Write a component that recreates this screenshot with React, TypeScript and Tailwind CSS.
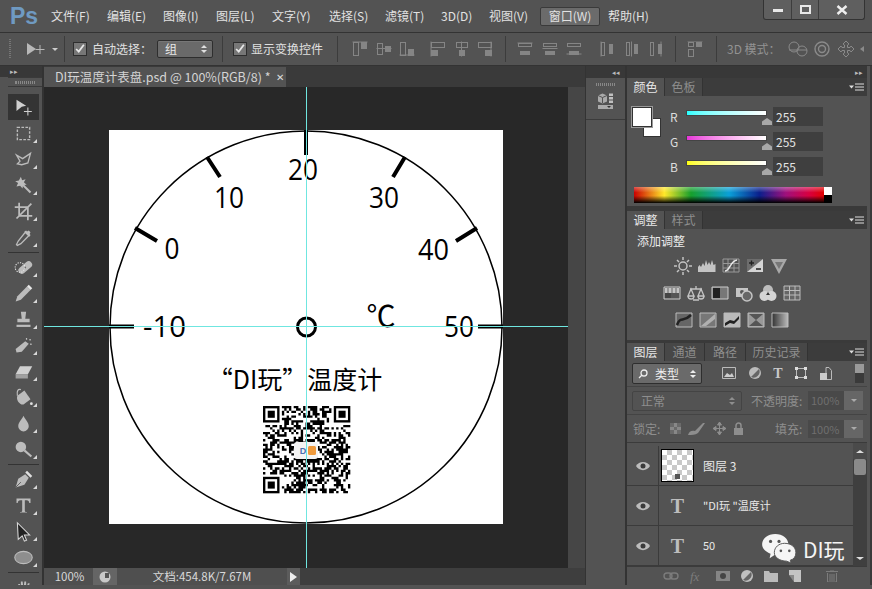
import React from 'react';

const CJK = "font-['Noto_Sans_CJK_SC','Noto_Sans',sans-serif]";

const menus = [
  ['文件(F)', 'w-[56px]'],
  ['编辑(E)', 'w-[56px]'],
  ['图像(I)', 'w-[53px]'],
  ['图层(L)', 'w-[56px]'],
  ['文字(Y)', 'w-[57px]'],
  ['选择(S)', 'w-[56px]'],
  ['滤镜(T)', 'w-[56px]'],
  ['3D(D)', 'w-[48px]'],
  ['视图(V)', 'w-[51px]'],
];

function Corner() {
  return <span className="absolute right-[2px] bottom-[3px] h-0 w-0 border-b-[4px] border-l-[4px] border-b-[#d8d8d8] border-l-transparent" />;
}

function Tool({ children, active, corner = true }: { children: React.ReactNode; active?: boolean; corner?: boolean }) {
  return (
    <div className={`relative flex h-[26px] w-[31px] shrink-0 items-center justify-center ${active ? 'bg-[#343434]' : ''}`}>
      <svg viewBox="0 0 24 24" className="h-[21px] w-[21px]" fill="#bcbcbc" stroke="none">{children}</svg>
      {corner && <Corner />}
    </div>
  );
}

function ToolSep() {
  return <div className="flex h-[4px] w-[31px] shrink-0 items-center"><div className="h-px w-full bg-[#333]" /></div>;
}

function Toolbox() {
  return (
    <div className="flex w-[44px] shrink-0 flex-col overflow-hidden border-r-2 border-[#333] pl-[8px]">
      <div className="-ml-[8px] flex h-[11px] shrink-0 items-center bg-[#383838] pl-[10px] text-[7px] leading-none text-[#bbb]">▸▸</div>
      <div className="flex h-[10px] w-[34px] shrink-0 items-center justify-center border-y border-[#3a3a3a]">
        <div className="h-[3px] w-[20px] border-x border-[#888] bg-[repeating-linear-gradient(90deg,#888_0_1px,transparent_1px_2px)]" />
      </div>
      <div className="flex flex-1 flex-col bg-[#535353] pt-[7px]">
        <Tool active corner={false}>
          <path d="M4 3l11 7-5 1 0 0-6 5z" fill="#d0d0d0" />
          <path d="M17 12v9M12.5 16.5h9" stroke="#d0d0d0" strokeWidth="1.2" fill="none" />
        </Tool>
        <Tool><rect x="5" y="5" width="14" height="14" fill="none" stroke="#bcbcbc" strokeWidth="1.6" strokeDasharray="3 1.6" /></Tool>
        <Tool><path d="M4 7l7 4 9-6-3 11-7 2-5-1 3-3z" fill="none" stroke="#bcbcbc" strokeWidth="1.5" /></Tool>
        <Tool>
          <path d="M9 2l1.4 4 4-1.2-2 3.6 3.2 2.6-4.1.4-.6 4.1-2.8-3.1L4 13l1.8-3.8L2.5 7l4.2-.8z" />
          <path d="M11 11l9 9" stroke="#bcbcbc" strokeWidth="2.4" />
        </Tool>
        <Tool><path d="M7 2v15h15M2 7h15v15M4 20L21 3" fill="none" stroke="#bcbcbc" strokeWidth="2" /></Tool>
        <Tool>
          <path d="M14 6l4 4-9 9-4 2-1-1 2-4z" fill="none" stroke="#bcbcbc" strokeWidth="1.5" />
          <path d="M13 5l6 6 1-2-1-1 1-2-2-2-2 1-1-1z" />
        </Tool>
        <ToolSep />
        <Tool>
          <g transform="rotate(-40 14 12)"><rect x="5" y="8" width="18" height="8" rx="4" /><circle cx="14" cy="12" r="1" fill="#535353" /></g>
          <circle cx="8" cy="12" r="5.5" fill="none" stroke="#e4e4e4" strokeWidth="1.2" strokeDasharray="1.4 1.4" />
        </Tool>
        <Tool>
          <path d="M3 21l2-6L16 4l4 4L9 19z" />
          <path d="M16 4l2-2 4 4-2 2z" fill="#e8e8e8" />
        </Tool>
        <Tool>
          <path d="M9 3h6l-1 8h5v4H5v-4h5z" />
          <rect x="4" y="18" width="16" height="2.5" />
        </Tool>
        <Tool>
          <path d="M3 16L14 7l4 3-8 9-6 1z" />
          <path d="M15 4l1 1M19 5l1 1M20 10l1 1" stroke="#e8e8e8" strokeWidth="1.4" />
        </Tool>
        <Tool>
          <path d="M3 15l5-9h14l-5 9z" fill="#d0d0d0" />
          <path d="M3 15h14v5H3z" fill="#a0a0a0" />
        </Tool>
        <Tool>
          <path d="M5 10l8-6 7 10-8 6c-4 1-9-5-7-10z" />
          <path d="M9 3c-3-1-5 1-4 7" stroke="#bcbcbc" strokeWidth="1.4" fill="none" />
          <circle cx="21" cy="19" r="1.6" fill="#e0e0e0" />
        </Tool>
        <Tool><path d="M12 3c2 5 6 7 6 12a6 6 0 0 1-12 0c0-5 4-7 6-12z" /></Tool>
        <Tool>
          <circle cx="9" cy="9" r="6" />
          <path d="M13 13l8 7" stroke="#bcbcbc" strokeWidth="2.4" />
        </Tool>
        <ToolSep />
        <Tool>
          <path d="M3 21l3-10 8-5 4 4-5 8z" />
          <path d="M14 4l2-2 6 6-2 2z" fill="#e0e0e0" />
          <path d="M3 21l6-6" stroke="#535353" strokeWidth="1" />
        </Tool>
        <Tool><path d="M4 4h16v5h-1.4c-.3-2-1-3-3-3H13.5v12c0 1 .5 1.4 2.5 1.4V20H8v-.6c2 0 2.500-.4 2.500-1.400V6H8.400c-2 0-2.700 1-3 3H4z" /></Tool>
        <Tool><path d="M5 2l14 14-6 0 2.500 6-2.500 1-2.500-6L6 21z" fill="#222" stroke="#d8d8d8" strokeWidth="1.2" /></Tool>
        <Tool><ellipse cx="12" cy="12" rx="10" ry="7" fill="#8e8e8e" stroke="#bdbdbd" strokeWidth="1.2" /></Tool>
        <ToolSep />
        <Tool corner={false}><path d="M3 14l3 2V8l2 0 1 5V5h2l1 8 1-8h2l0 8 2-6h2l-2 10 3-2 1 1-4 7H7z" /></Tool>
      </div>
    </div>
  );
}

function Align({ bars, line, horizontal }: { bars: number[][]; line: number; horizontal?: boolean }) {
  return (
    <svg viewBox="0 0 16 16" className="h-[16px] w-[16px] shrink-0" fill="none" stroke="#858585">
      {horizontal ? <path d={`M${line} .5V15.500`} /> : <path d={`M.5 ${line}H15.500`} />}
      {bars.map(([a, b, c, d], i) => (
        <rect key={i} x={a + 0.5} y={b + 0.5} width={c} height={d} fill={i === 1 ? '#858585' : 'none'} />
      ))}
    </svg>
  );
}

function Check() {
  return (
    <div className="flex h-[14px] w-[14px] shrink-0 items-center justify-center border border-[#2e2e2e] bg-[#777]">
      <svg viewBox="0 0 14 14" className="h-[14px] w-[14px]"><path d="M2.500 7l3 3 6-8" fill="none" stroke="#e8e8e8" strokeWidth="2" /></svg>
    </div>
  );
}

function Sep({ className }: { className: string }) {
  return <div className={`h-[26px] w-px shrink-0 bg-[#3c3c3c] ${className}`} />;
}

function OptionsBar() {
  return (
    <div className="flex h-[34px] shrink-0 items-center border-y border-[#333] bg-[#535353] text-[12px] whitespace-nowrap text-[#e0e0e0]">
      <div className="ml-[9px] h-[20px] w-[3px] bg-[repeating-linear-gradient(180deg,#777_0_1px,transparent_1px_2px)]" />
      <svg viewBox="0 0 20 14" className="ml-[15px] h-[14px] w-[20px] shrink-0">
        <path d="M1 1l9 6-9 6z" fill="#b8b8b8" />
        <path d="M14 3v9M9.500 7.500h9" stroke="#b8b8b8" fill="none" />
      </svg>
      <span className="ml-[6px] h-0 w-0 border-x-[3px] border-t-[3px] border-x-transparent border-t-[#ccc]" />
      <Sep className="ml-[6px]" />
      <div className="ml-[8px]"><Check /></div>
      <span className="ml-[5px] w-[60px] shrink-0">自动选择：</span>
      <div className="ml-[5px] flex h-[18px] w-[56px] shrink-0 items-center justify-between rounded-[2px] border border-[#2e2e2e] bg-[#6a6a6a] pr-[5px] pl-[7px] text-[#e8e8e8] shadow-[inset_0_1px_0_#777]">
        <span>组</span>
        <span className="flex flex-col gap-[2px]">
          <span className="block h-0 w-0 border-x-[3px] border-b-[3px] border-x-transparent border-b-[#e0e0e0]" />
          <span className="block h-0 w-0 border-x-[3px] border-t-[3px] border-x-transparent border-t-[#e0e0e0]" />
        </span>
      </div>
      <Sep className="ml-[9px]" />
      <div className="ml-[10px]"><Check /></div>
      <span className="ml-[4px] w-[72px] shrink-0">显示变换控件</span>
      <Sep className="ml-[14px]" />
      <div className="ml-[14px] flex w-[63px] shrink-0 justify-between">
        <Align line={1} bars={[[1, 1, 5, 13], [9, 1, 5, 6]]} />
        <Align line={7.5} bars={[[1, 2, 5, 11], [9, 5, 5, 5]]} />
        <Align line={14} bars={[[1, 1, 5, 13], [9, 8, 5, 6]]} />
      </div>
      <div className="ml-[15px] flex w-[63px] shrink-0 justify-between">
        <Align line={1} horizontal bars={[[1, 1, 13, 5], [1, 9, 6, 5]]} />
        <Align line={7.5} horizontal bars={[[2, 1, 11, 5], [5, 9, 5, 5]]} />
        <Align line={14} horizontal bars={[[1, 1, 13, 5], [8, 9, 6, 5]]} />
      </div>
      <Sep className="ml-[12px] mr-[11px]" />
      <div className="flex w-[65px] shrink-0 justify-between">
        <Align line={2} bars={[[1, 2, 13, 3], [3, 10, 9, 3]]} />
        <Align line={7.5} bars={[[1, 2, 13, 3], [3, 10, 9, 3]]} />
        <Align line={13} bars={[[1, 2, 13, 3], [3, 10, 9, 3]]} />
      </div>
      <div className="ml-[17px] flex w-[65px] shrink-0 justify-between">
        <Align line={2} horizontal bars={[[2, 1, 3, 13], [10, 3, 3, 9]]} />
        <Align line={7.5} horizontal bars={[[2, 1, 3, 13], [10, 3, 3, 9]]} />
        <Align line={13} horizontal bars={[[2, 1, 3, 13], [10, 3, 3, 9]]} />
      </div>
      <Sep className="ml-[11px]" />
      <div className="ml-[11px]"><Align line={0} bars={[[1, 1, 5, 4], [9, 1, 5, 4], [1, 8, 5, 7]]} /></div>
      <Sep className="ml-[13px]" />
      <span className="ml-[10px] w-[50px] shrink-0 text-[#929292]">3D 模式：</span>
      <svg viewBox="0 0 22 16" className="ml-[10px] h-[16px] w-[22px] shrink-0" fill="none" stroke="#8a8a8a"><circle cx="7" cy="6" r="5" /><circle cx="15" cy="10" r="5" /><path d="M2 9h18" /></svg>
      <svg viewBox="0 0 16 16" className="ml-[5px] h-[16px] w-[16px] shrink-0" fill="none" stroke="#8a8a8a" strokeWidth="1.4"><circle cx="8" cy="8" r="7" /><circle cx="8" cy="8" r="3.500" /></svg>
      <svg viewBox="0 0 18 18" className="ml-[7px] h-[18px] w-[18px] shrink-0" fill="none" stroke="#8a8a8a"><path d="M9 1l3 3-1.500 1V7.500H13L14 6l3 3-3 3-1-1.500H10.500V13l1.500 1-3 3-3-3 1.500-1V10.500H5L4 12 1 9l3-3 1 1.500h2.500V5L6 4z" /></svg>
      <svg viewBox="0 0 12 16" className="ml-[5px] h-[16px] w-[12px] shrink-0" fill="#8a8a8a"><path d="M0 8l4-3v6z" /></svg>
    </div>
  );
}

function TopBar() {
  return (
    <div className="relative flex h-[32px] shrink-0 items-center bg-[#535353] pl-[10px] text-[12px] text-[#e2e2e2]">
      <span className="w-[41px] shrink-0 font-['Liberation_Sans',sans-serif] text-[23px] leading-none font-bold text-[#6f9ac2]">Ps</span>
      {menus.map(([m, w]) => (
        <span key={m} className={`${w} shrink-0`}>{m}</span>
      ))}
      <span className="flex h-[19px] w-[60px] shrink-0 items-center justify-center rounded-[2px] border border-[#3a3a3a] bg-[#6b6b6b]">窗口(W)</span>
      <span className="ml-[8px] shrink-0">帮助(H)</span>
      <div className="absolute top-0 right-[7px] flex h-[20px] w-[102px] rounded-b-[3px] border border-t-0 border-[#333] bg-[#5f5f5f]">
        <div className="flex w-[28px] items-center justify-center border-r border-[#3d3d3d]"><div className="mt-[2px] h-[3px] w-[10px] bg-[#e8e8e8]" /></div>
        <div className="flex w-[27px] items-center justify-center border-r border-[#3d3d3d]"><div className="h-[9px] w-[11px] border-2 border-[#e8e8e8]" /></div>
        <div className="flex flex-1 items-center justify-center">
          <svg viewBox="0 0 12 10" className="h-[10px] w-[12px]"><path d="M1.500 1l9 8M10.500 1l-9 8" stroke="#eee" strokeWidth="2.400" /></svg>
        </div>
      </div>
    </div>
  );
}

// fake QR pattern, same every run
function qrPath() {
  const n = 37;
  let seed = 90121;
  let d = '';
  const finder = (x: number, y: number) => x < 8 && y < 8;
  for (let y = 0; y < n; y++) {
    for (let x = 0; x < n; x++) {
      seed = (seed * 1103515245 + 12345) & 0x7fffffff;
      const on = ((seed >> 16) & 7) < 4;
      if (finder(x, y) || finder(n - 1 - x, y) || finder(x, n - 1 - y)) continue;
      if (on) d += `M${x} ${y}h1v1h-1z`;
    }
  }
  return d;
}

function Finder({ x, y }: { x: number; y: number }) {
  return (
    <g>
      <rect x={x + 0.5} y={y + 0.5} width="6" height="6" fill="none" stroke="#000" />
      <rect x={x + 2} y={y + 2} width="3" height="3" fill="#000" />
    </g>
  );
}

function Dial() {
  const font = "'Open Sans','Noto Sans CJK SC',sans-serif";
  const labels: [string, number, number, number][] = [
    ['20', 194, 50, 30],
    ['10', 120, 78, 30],
    ['30', 275, 78, 30],
    ['0', 63, 129, 15],
    ['40', 324.500, 130, 31],
    ['-10', 55.500, 207, 43],
    ['50', 350, 207, 30],
  ];
  return (
    <svg viewBox="0 0 394 394" className="h-full w-full">
      <circle cx="197" cy="197" r="196" fill="none" stroke="#000" strokeWidth="1.500" />
      <path
        d="M197 0V25M98 27L111 47M296 27L284 47M26 98L48 111M368 98L347 111M0 196.500H25M369 196.500H394"
        stroke="#000"
        strokeWidth="4"
        fill="none"
      />
      <circle cx="197.500" cy="197" r="9" fill="none" stroke="#000" strokeWidth="3" />
      {labels.map(([t, x, y, w]) => (
        <text key={t} x={x} y={y} textAnchor="middle" fontFamily={font} fontSize="29" textLength={w} lengthAdjust="spacingAndGlyphs" fill="#000">{t}</text>
      ))}
      <text x="272" y="197" textAnchor="middle" fontFamily="'Noto Sans CJK SC',sans-serif" fontSize="29" fill="#000">℃</text>
      <text x="186" y="259" textAnchor="middle" fontFamily="'Noto Sans CJK SC',sans-serif" fontSize="25" fill="#000">“DI玩”温度计</text>
      <g transform="translate(154 276) scale(2.36)">
        <path d={qrPath()} fill="#000" />
        <Finder x={0} y={0} />
        <Finder x={30} y={0} />
        <Finder x={0} y={30} />
      </g>
      <rect x="185" y="312" width="24" height="17" rx="3" fill="#f4f4f4" />
      <text x="194" y="324" textAnchor="middle" fontFamily="'Liberation Sans',sans-serif" fontSize="9" fontWeight="700" fill="#4a6fb0">D</text>
      <rect x="199" y="316" width="8" height="9" rx="1.500" fill="#ef9a3c" />
    </svg>
  );
}

function DocArea() {
  return (
    <div className="flex min-w-0 flex-1 flex-col">
      <div className="flex h-[21px] shrink-0 items-end bg-[#3a3a3a]">
        <div className="flex h-[20px] w-[242px] items-center bg-[#535353] pl-[11px] text-[12.500px] text-[#d4d4d4]">
          <span className="w-[221px] shrink-0 whitespace-nowrap">DI玩温度计表盘.psd @ 100%(RGB/8) *</span>
          <span className="text-[10px] leading-none text-[#ddd]">✕</span>
        </div>
      </div>
      <div className="flex min-h-0 flex-1">
        <div className="relative flex flex-1 items-center justify-center bg-[#282828] pb-px">
          <div className="h-[394px] w-[394px] shrink-0 bg-white"><Dial /></div>
          <div className="absolute top-0 bottom-0 left-[262px] w-px bg-[#6fe6e0]" />
          <div className="absolute top-[239px] right-0 left-0 h-px bg-[#6fe6e0]" />
        </div>
        <div className="w-[17px] shrink-0 bg-[#464646]" />
      </div>
      <div className="flex h-[17px] shrink-0 items-center bg-[#3e3e3e] text-[11.500px] text-[#d8d8d8]">
        <div className="flex h-full w-[49px] items-center justify-center bg-[#4f4f4f] pl-[2px]">100%</div>
        <div className="flex h-full w-[24px] items-center justify-center bg-[#656565]">
          <svg viewBox="0 0 12 12" className="h-[12px] w-[12px]"><circle cx="6" cy="6" r="5.500" fill="#c8c8c8" /><path d="M6 2h4v5H6z" fill="#555" /></svg>
        </div>
        <div className="flex h-full w-[170px] items-center justify-center bg-[#4f4f4f]">文档:454.8K/7.67M</div>
        <div className="flex h-full w-[13px] items-center justify-center bg-[#5c5c5c]">
          <span className="h-0 w-0 border-y-[5px] border-l-[7px] border-y-transparent border-l-[#eee]" />
        </div>
      </div>
    </div>
  );
}

function MenuIcon() {
  return (
    <svg viewBox="0 0 16 9" className="h-[9px] w-[16px] shrink-0">
      <path d="M0 2.500h5L2.500 5.500z" fill="#ddd" />
      <path d="M6 1h9M6 4h9M6 7h9" stroke="#ddd" />
    </svg>
  );
}

function Tabs({ tabs, first = 'w-[38px]' }: { tabs: [string, string][]; first?: string }) {
  return (
    <div className="flex h-[18px] shrink-0 items-stretch bg-[#3c3c3c] text-[12px] leading-[18px]">
      {tabs.map(([t, w], i) => (
        <div key={t} className={`${i === 0 ? `${first} bg-[#535353] text-[#e8e8e8]` : `${w} bg-[#474747] text-[#8e8e8e]`} shrink-0 border-r border-[#333] text-center`}>{t}</div>
      ))}
      <div className="ml-auto flex items-center pr-[2px]"><MenuIcon /></div>
    </div>
  );
}

function ColorRow({ label, grad }: { label: string; grad: string }) {
  return (
    <div className="flex h-[19px] items-center">
      <span className="w-[16px] text-[12px] text-[#ddd]">{label}</span>
      <div className="relative mb-[7px] h-[6px] w-[81px] border border-[#444]">
        <div className={`h-full w-full ${grad}`} />
        <span className="absolute top-[7px] -right-[6px] h-[7px] w-[10px] bg-[#a8a8a8] [clip-path:polygon(50%_0,100%_50%,100%_100%,0_100%,0_50%)]" />
      </div>
      <div className="ml-[6px] flex h-[19px] w-[50px] items-center bg-[#3f3f3f] pl-[3px] text-[12px] text-[#e4e4e4]">255</div>
    </div>
  );
}

function ColorPanel() {
  return (
    <div className="flex h-[110px] shrink-0 flex-col bg-[#535353] pl-[5px]">
      <div className="flex pt-[11px]">
        <div className="relative h-[30px] w-[29px] shrink-0">
          <div className="absolute top-[11px] left-[11px] h-[19px] w-[18px] border border-[#333] bg-white" />
          <div className="absolute top-0 left-0 h-[20px] w-[20px] border border-[#333] bg-white outline outline-[#999]" />
        </div>
        <div className="ml-[9px] flex flex-col gap-[6px]">
          <ColorRow label="R" grad="bg-linear-to-r from-[#2ff] to-white" />
          <ColorRow label="G" grad="bg-linear-to-r from-[#e633d8] to-white" />
          <ColorRow label="B" grad="bg-linear-to-r from-[#ff0] to-white" />
        </div>
      </div>
      <div className="mt-[11px] ml-[2px] flex h-[16px] w-[198px]">
        <div className="flex-1 bg-[linear-gradient(180deg,#ffffff55_0,#ffffff00_35%,#00000000_55%,#000_100%),linear-gradient(90deg,#c00_0,#ffe82a_16%,#17a02c_30%,#0aa0d8_50%,#0b1f8c_66%,#a0107c_80%,#d80040_92%,#e00000_100%)]" />
        <div className="flex w-[8px] flex-col"><div className="flex-1 bg-white" /><div className="flex-1 bg-black" /></div>
      </div>
    </div>
  );
}

function Adj({ children }: { children: React.ReactNode }) {
  return <svg viewBox="0 0 18 18" className="h-[18px] w-[18px] shrink-0">{children}</svg>;
}

const gradA = '#c4c4c4';

function AdjustPanel() {
  return (
    <div className="flex h-[111px] shrink-0 flex-col bg-[#535353]">
      <div className="pt-[3px] pl-[10px] text-[12px] leading-[17px] text-[#ececec]">添加调整</div>
      <div className="mt-[8px] flex gap-[6px] pl-[47px]">
        <Adj>
          <circle cx="9" cy="9" r="4" fill="none" stroke={gradA} strokeWidth="1.500" />
          <path d="M9 0v3M9 15v3M0 9h3M15 9h3M3 3l2 2M15 3l-2 2M3 15l2-2M15 15l-2-2" stroke={gradA} strokeWidth="1.500" />
        </Adj>
        <Adj><path d="M0 15V10l1.500-2 1.500 2 2-4 1.500 3 1.500-6 1.500 5 1.500-3 1.500 3 1.500-5 1.500 5 2-1V15z" fill={gradA} /></Adj>
        <Adj>
          <path d="M1 2h16v13H1zM1 6.500h16M1 11h16M6 2v13M12 2v13" fill="none" stroke="#999" />
          <path d="M3 14c5 0 5-10 12-11" fill="none" stroke="#e8e8e8" strokeWidth="1.500" />
        </Adj>
        <Adj>
          <path d="M1 2h16v13H1z" fill="#6d6d6d" />
          <path d="M1 15L17 2v13z" fill="#d4d4d4" />
          <path d="M3 6h5M5.500 3.500v5M10 12h5" stroke="#222" strokeWidth="1.400" />
        </Adj>
        <Adj><path d="M1 2h16l-8 15z" fill="#a8a8a8" /><path d="M5 5h8l-4 7z" fill="#777" /></Adj>
      </div>
      <div className="mt-[9px] flex gap-[6px] pl-[36px]">
        <Adj><path d="M1 3h16v12H1z" fill="#555" stroke="#ccc" /><path d="M2 4h14v5H2z" fill="#c4c4c4" /><path d="M2 9h6v5H2z" fill="#444" /><path d="M5 4v5M9 4v5M13 4v5" stroke="#666" /></Adj>
        <Adj><path d="M9 2v3M3 5h12M1 12l3-7 3 7zM11 12l3-7 3 7zM1 12c0 4 6 4 6 0zM11 12c0 4 6 4 6 0zM6 16h6" fill="none" stroke={gradA} strokeWidth="1.300" /></Adj>
        <Adj><path d="M1 3h16v12H1z" fill="#777" stroke="#ccc" /><path d="M2 4h7v10H2z" fill="#222" /></Adj>
        <Adj>
          <path d="M1 4h12v9H1z" fill={gradA} />
          <circle cx="7" cy="8" r="2" fill="#555" />
          <circle cx="12" cy="12" r="5" fill="#666" stroke={gradA} strokeWidth="1.500" />
        </Adj>
        <Adj><circle cx="9" cy="6" r="5" fill="#bdbdbd" /><circle cx="5.500" cy="12" r="5" fill="#d4d4d4" /><circle cx="12.500" cy="12" r="5" fill="#d4d4d4" /><path d="M9 8l-2 3h4z" fill="#333" /></Adj>
        <Adj><path d="M1 2h16v14H1zM1 6.500h16M1 11h16M6.500 2v14M12 2v14" fill="#666" stroke="#bbb" /></Adj>
      </div>
      <div className="mt-[9px] flex gap-[6px] pl-[48px]">
        <Adj><path d="M1 2h16v14H1z" fill="#666" stroke="#bbb" /><path d="M2 14C5 5 8 12 16 4" fill="none" stroke="#222" strokeWidth="2.500" /></Adj>
        <Adj><path d="M1 2h16v14H1z" fill="#777" stroke="#bbb" /><path d="M2 15L16 3v5L7 15z" fill="#b0b0b0" /></Adj>
        <Adj><path d="M1 2h16v14H1z" fill="#bbb" stroke="#bbb" /><path d="M2 12l5-3 4 1 5-5v3l-5 5-4-1-5 3z" fill="#222" /></Adj>
        <Adj><path d="M1 2h16v14H1z" fill="#999" stroke="#bbb" /><path d="M2 3h14L9 9zM2 15h14L9 9z" fill="#555" /></Adj>
        <Adj><defs><linearGradient id="gm"><stop offset="0" stopColor="#333" /><stop offset="1" stopColor="#bbb" /></linearGradient></defs><path d="M1 2h16v14H1z" fill="url(#gm)" stroke="#bbb" /></Adj>
      </div>
    </div>
  );
}

function Eye() {
  return (
    <div className="flex w-[31px] shrink-0 items-center justify-center">
      <svg viewBox="0 0 14 10" className="h-[10px] w-[14px]"><path d="M0 5c3-5.500 11-5.500 14 0-3 5.500-11 5.500-14 0z" fill="#bcbcbc" /><circle cx="7" cy="5" r="2.500" fill="#3b3b3b" /></svg>
    </div>
  );
}

function LayerRow({ name, thumb, textCls }: { name: string; thumb: React.ReactNode; textCls: string }) {
  return (
    <div className="flex h-[40px] shrink-0 border-b border-[#3b3b3b]">
      <Eye />
      <div className="flex w-[45px] shrink-0 items-center border-l border-[#3b3b3b] pl-[2px]">{thumb}</div>
      <span className={`self-center whitespace-nowrap ${textCls} text-[#e8e8e8]`}>{name}</span>
    </div>
  );
}

function TIcon() {
  return <span className="w-[33px] text-center font-['Liberation_Serif',serif] text-[20px] leading-none font-bold text-[#bdbdbd]">T</span>;
}

function Caret() {
  return (
    <span className="flex flex-col gap-[2px]">
      <span className="block h-0 w-0 border-x-[3px] border-b-[3px] border-x-transparent border-b-current" />
      <span className="block h-0 w-0 border-x-[3px] border-t-[3px] border-x-transparent border-t-current" />
    </span>
  );
}

function LayersPanel() {
  return (
    <div className="flex min-h-0 flex-1 flex-col bg-[#535353] text-[12px]">
      <div className="flex h-[26px] shrink-0 items-center border-b border-[#444] pl-[5px]">
        <div className="flex h-[21px] w-[70px] shrink-0 items-center rounded-[2px] border border-[#2e2e2e] bg-[#6a6a6a] px-[5px] text-[#eee]">
          <svg viewBox="0 0 10 10" className="h-[10px] w-[10px] shrink-0"><circle cx="6" cy="4" r="3" fill="none" stroke="#eee" strokeWidth="1.300" /><path d="M4 6L1 9" stroke="#eee" strokeWidth="1.300" /></svg>
          <span className="ml-[7px]">类型</span>
          <span className="ml-auto"><Caret /></span>
        </div>
        <div className="ml-[20px] flex w-[110px] shrink-0 justify-between text-[#c8c8c8]">
          <svg viewBox="0 0 14 12" className="h-[12px] w-[14px]"><path d="M.5.5h13v11H.5z" fill="#555" stroke="#bbb" /><path d="M2 10l3-4 3 2 2-2 2 4z" fill="#ccc" /></svg>
          <svg viewBox="0 0 12 12" className="h-[12px] w-[12px]"><circle cx="6" cy="6" r="6" fill="#bbb" /><path d="M10 2a6 6 0 0 1-8 8z" fill="#666" /></svg>
          <span className="font-['Liberation_Serif',serif] text-[14px] leading-none font-bold">T</span>
          <svg viewBox="0 0 12 12" className="h-[12px] w-[12px]"><path d="M1.500 1.500h9v9h-9z" fill="none" stroke="#bbb" /><path d="M0 0h3v3H0zM9 0h3v3H9zM0 9h3v3H0zM9 9h3v3H9z" fill="#ddd" /></svg>
          <svg viewBox="0 0 12 14" className="h-[14px] w-[12px]"><path d="M6 .5h3l2.500 3v9H6z" fill="none" stroke="#bbb" /><path d="M0 6h7v7H0z" fill="#ccc" /></svg>
        </div>
        <div className="ml-[23px] flex h-[19px] w-[9px] shrink-0 flex-col bg-[#3a3a3a]"><div className="h-[9px] bg-[#999]" /></div>
      </div>
      <div className="flex h-[28px] shrink-0 items-center border-b border-[#444] pl-[5px] text-[#8e8e8e]">
        <div className="flex h-[20px] w-[110px] shrink-0 items-center justify-between rounded-[2px] border border-[#444] pr-[6px] pl-[8px]">
          <span>正常</span>
          <Caret />
        </div>
        <span className="ml-[9px] w-[57px] shrink-0">不透明度:</span>
        <div className="flex h-[19px] w-[55px] shrink-0 text-[11px]">
          <div className="flex-1 bg-[#494949] pl-[3px] leading-[19px] text-[#6f6f6f]">100%</div>
          <div className="flex w-[19px] items-center justify-center bg-[#666]"><span className="h-0 w-0 border-x-[3px] border-t-[3px] border-x-transparent border-t-[#aaa]" /></div>
        </div>
      </div>
      <div className="flex h-[28px] shrink-0 items-center border-b border-[#3b3b3b] pl-[6px] text-[#8e8e8e]">
        <span className="w-[37px] shrink-0">锁定:</span>
        <div className="flex w-[74px] shrink-0 items-center justify-between">
          <svg viewBox="0 0 11 11" className="h-[11px] w-[11px]"><path d="M0 0h11v11H0z" fill="#888" /><path d="M0 0h4v4H0zM7 0h4v4H7zM4 4h3v3H4zM0 7h4v4H0zM7 7h4v4H7z" fill="#6a6a6a" /></svg>
          <svg viewBox="0 0 18 12" className="h-[12px] w-[18px]"><path d="M0 12c1-4 4-5 7-4L15 0h2L10 10c-3 2-6 2-10 2z" fill="#8e8e8e" /></svg>
          <svg viewBox="0 0 13 13" className="h-[13px] w-[13px]"><path d="M6.500 0v13M0 6.500h13M6.500 0L4.500 3h4zM6.500 13l-2-3h4zM0 6.500l3-2v4zM13 6.500l-3-2v4z" stroke="#8e8e8e" fill="#8e8e8e" /></svg>
          <svg viewBox="0 0 11 13" className="h-[13px] w-[11px]"><path d="M3 6V3.500a2.500 2.500 0 0 1 5 0V6" fill="none" stroke="#8e8e8e" strokeWidth="1.500" /><path d="M1 6h9v7H1z" fill="#8e8e8e" /></svg>
        </div>
        <span className="ml-[31px] w-[33px] shrink-0">填充:</span>
        <div className="flex h-[18px] w-[55px] shrink-0 text-[11px]">
          <div className="flex-1 bg-[#494949] pl-[3px] leading-[18px] text-[#6f6f6f]">100%</div>
          <div className="flex w-[19px] items-center justify-center bg-[#666]"><span className="h-0 w-0 border-x-[3px] border-t-[3px] border-x-transparent border-t-[#aaa]" /></div>
        </div>
      </div>
      <div className="flex min-h-0 flex-1">
        <div className="flex min-w-0 flex-1 flex-col pt-[3px]">
          <LayerRow
            name="图层 3"
            textCls="text-[12px]"
            thumb={<div className="flex h-[33px] w-[33px] items-end justify-center border border-black bg-[repeating-conic-gradient(#c9c9c9_0_25%,#fff_0_50%)] bg-[length:10px_10px] pb-[2px]"><div className="h-[5px] w-[5px] bg-[#555]" /></div>}
          />
          <LayerRow name={'"DI玩 "温度计'} textCls="text-[11px]" thumb={<TIcon />} />
          <LayerRow name="50" textCls="text-[11px]" thumb={<TIcon />} />
        </div>
        <div className="flex w-[14px] shrink-0 flex-col items-center bg-[#3f3f3f]">
          <div className="flex h-[16px] w-full items-center justify-center bg-[#4a4a4a]"><span className="h-0 w-0 border-x-[4px] border-b-[3px] border-x-transparent border-b-[#ddd]" /></div>
          <div className="h-[16px] w-[12px] rounded-[2px] bg-[#8a8a8a]" />
          <div className="mt-auto flex h-[16px] items-center"><span className="h-0 w-0 border-x-[4px] border-t-[3px] border-x-transparent border-t-[#ddd]" /></div>
        </div>
      </div>
      <div className="flex h-[19px] shrink-0 items-center gap-[11px] border-t border-[#3b3b3b] pl-[36px]">
        <svg viewBox="0 0 16 8" className="h-[8px] w-[16px]"><rect x="1" y="1" width="8" height="6" rx="3" fill="none" stroke="#7c7c7c" strokeWidth="1.400" /><rect x="7" y="1" width="8" height="6" rx="3" fill="none" stroke="#7c7c7c" strokeWidth="1.400" /></svg>
        <span className="w-[15px] font-['Liberation_Serif',serif] text-[13px] leading-none text-[#7c7c7c] italic">fx</span>
        <svg viewBox="0 0 14 10" className="h-[10px] w-[14px]"><path d="M0 0h14v10H0z" fill="#858585" /><circle cx="7" cy="5" r="3" fill="#444" /></svg>
        <svg viewBox="0 0 12 12" className="h-[12px] w-[12px]"><circle cx="6" cy="6" r="6" fill="#c0c0c0" /><path d="M10 2a6 6 0 0 1-8 8z" fill="#666" /></svg>
        <svg viewBox="0 0 14 11" className="h-[11px] w-[14px]"><path d="M0 0h5l1 2h8v9H0z" fill="#bbb" /></svg>
        <svg viewBox="0 0 12 12" className="h-[12px] w-[12px]"><path d="M0 0h12v12H5V5H0z" fill="#c4c4c4" /><path d="M0 5h5v7z" fill="#888" /></svg>
        <svg viewBox="0 0 12 12" className="ml-[14px] h-[12px] w-[12px]"><path d="M0 1.500h12M4 0h4M1.500 3v9h9V3M4 4v7M6 4v7M8 4v7" stroke="#7c7c7c" fill="none" /></svg>
      </div>
    </div>
  );
}

function Panels() {
  return (
    <div className="relative flex w-[245px] shrink-0 flex-col border-r-2 border-[#3a3a3a] pr-[3px]">
      <div className="flex h-[12px] shrink-0 items-center justify-end bg-[#383838] pr-[4px] text-[7px] leading-none text-[#bbb]">▸▸</div>
      <Tabs tabs={[['颜色', ''], ['色板', 'w-[38px]']]} />
      <ColorPanel />
      <div className="h-[5px] shrink-0 bg-[#3a3a3a]" />
      <Tabs tabs={[['调整', ''], ['样式', 'w-[38px]']]} />
      <AdjustPanel />
      <div className="h-[3px] shrink-0 bg-[#3a3a3a]" />
      <Tabs tabs={[['图层', ''], ['通道', 'w-[40px]'], ['路径', 'w-[41px]'], ['历史记录', 'w-[62px]']]} />
      <LayersPanel />
      {/* watermark on top of the screenshot */}
      <div className="absolute top-[467px] left-[135px] flex items-start">
        <svg viewBox="0 0 36 32" className="h-[30px] w-[34px]">
          <path d="M14 1c8 0 14 5 14 11S22 23 14 23l-6 4 1-5C4 20 0 17 0 12 0 6 6 1 14 1z" fill="#f5f5f5" />
          <path d="M24 11c7 0 12 4 12 10 0 4-2 7-6 8l1 3-5-2c-7 0-13-4-13-9 0-6 5-10 11-10z" fill="#f5f5f5" stroke="#535353" />
          <circle cx="9" cy="9" r="1.700" fill="#535353" /><circle cx="18" cy="9" r="1.700" fill="#535353" />
          <circle cx="20" cy="19" r="1.400" fill="#535353" /><circle cx="29" cy="19" r="1.400" fill="#535353" />
        </svg>
        <span className="mt-[2px] ml-[7px] text-[21px] leading-[28px] whitespace-nowrap text-[#f5f5f5]">DI玩</span>
      </div>
    </div>
  );
}

function Dock() {
  return (
    <div className="flex w-[42px] shrink-0 flex-col border-r-2 border-l border-[#333] bg-[#535353]">
      <div className="flex h-[12px] shrink-0 items-center justify-end bg-[#383838] pr-[5px] text-[7px] leading-none text-[#bbb]">◂◂</div>
      <div className="flex h-[42px] shrink-0 flex-col items-center border-b border-[#3b3b3b] pt-[5px]">
        <div className="h-[3px] w-[19px] bg-[repeating-linear-gradient(90deg,#888_0_1px,transparent_1px_2px)]" />
        <svg viewBox="0 0 17 16" className="mt-[7px] h-[16px] w-[17px]">
          <path d="M1 2.500L5.500 0.500 10 2.500V8.500L5.500 10.500 1 8.500z" fill="#aaa" />
          <path d="M5.500 4.500V10M1 2.500L5.500 4.500 10 2.500" fill="none" stroke="#535353" />
          <path d="M12 0.500h4V3h-4zM12 4h4v2.500h-4zM12 7.500h4V10h-4z" fill="#c0c0c0" />
          <path d="M1 12h15v4H1z" fill="#aaa" />
          <path d="M10 13h4l-2 2z" fill="#333" />
        </svg>
      </div>
    </div>
  );
}

export default function App() {
  return (
    <div className={`flex h-[589px] w-[872px] flex-col overflow-hidden bg-[#535353] ${CJK}`}>
      <TopBar />
      <OptionsBar />
      <div className="flex min-h-0 flex-1 pb-[4px]">
        <Toolbox />
        <DocArea />
        <Dock />
        <Panels />
      </div>
    </div>
  );
}
